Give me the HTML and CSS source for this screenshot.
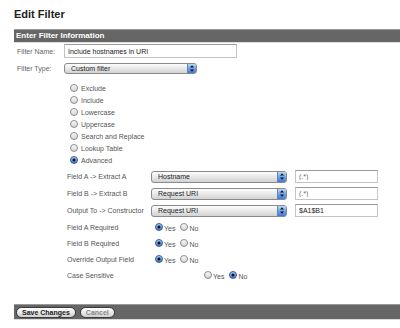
FILE: index.html
```html
<!DOCTYPE html>
<html lang="en">
<head>
    <meta charset="UTF-8">
    <title>Edit Filter</title>
    <link rel="stylesheet" href="styles.css">
</head>
<body>
    <div class="page">
        <h1>Edit Filter</h1>
        <div class="bar">Enter Filter Information</div>

        <div class="row row-name">
            <label class="label" for="filterName">Filter Name:</label>
            <input type="text" id="filterName" class="text name" value="Include hostnames in URI">
        </div>
        <div class="row row-type">
            <span class="label">Filter Type:</span>
            <div class="select type">
                <span class="value">Custom filter</span>
                <span class="arrow"><svg width="6" height="9" viewBox="0 0 6 9"><path d="M1 3.5L3 1.2L5 3.5Z M1 5.5L3 7.8L5 5.5Z" fill="#111"/></svg></span>
            </div>
        </div>

        <ul class="types">
            <li><input type="radio" name="ftype" id="t1"><label for="t1">Exclude</label></li>
            <li><input type="radio" name="ftype" id="t2"><label for="t2">Include</label></li>
            <li><input type="radio" name="ftype" id="t3"><label for="t3">Lowercase</label></li>
            <li><input type="radio" name="ftype" id="t4"><label for="t4">Uppercase</label></li>
            <li><input type="radio" name="ftype" id="t5"><label for="t5">Search and Replace</label></li>
            <li><input type="radio" name="ftype" id="t6"><label for="t6">Lookup Table</label></li>
            <li><input type="radio" name="ftype" id="t7" checked><label for="t7">Advanced</label></li>
        </ul>

        <div class="fields">
            <div class="field-row">
                <span class="field-label">Field A -&gt; Extract A</span>
                <div class="select wide">
                    <span class="value">Hostname</span>
                    <span class="arrow"><svg width="6" height="9" viewBox="0 0 6 9"><path d="M1 3.5L3 1.2L5 3.5Z M1 5.5L3 7.8L5 5.5Z" fill="#111"/></svg></span>
                </div>
                <input type="text" class="text short muted" value="(.*)">
            </div>
            <div class="field-row">
                <span class="field-label">Field B -&gt; Extract B</span>
                <div class="select wide">
                    <span class="value">Request URI</span>
                    <span class="arrow"><svg width="6" height="9" viewBox="0 0 6 9"><path d="M1 3.5L3 1.2L5 3.5Z M1 5.5L3 7.8L5 5.5Z" fill="#111"/></svg></span>
                </div>
                <input type="text" class="text short muted" value="(.*)">
            </div>
            <div class="field-row">
                <span class="field-label">Output To -&gt; Constructor</span>
                <div class="select wide">
                    <span class="value">Request URI</span>
                    <span class="arrow"><svg width="6" height="9" viewBox="0 0 6 9"><path d="M1 3.5L3 1.2L5 3.5Z M1 5.5L3 7.8L5 5.5Z" fill="#111"/></svg></span>
                </div>
                <input type="text" class="text short" value="$A1$B1">
            </div>
        </div>

        <div class="opts">
            <div class="opt-row">
                <span class="opt-label">Field A Required</span>
                <span class="choice"><input type="radio" name="reqA" id="ra1" checked><label for="ra1">Yes</label></span>
                <span class="choice"><input type="radio" name="reqA" id="ra2"><label for="ra2">No</label></span>
            </div>
            <div class="opt-row">
                <span class="opt-label">Field B Required</span>
                <span class="choice"><input type="radio" name="reqB" id="rb1" checked><label for="rb1">Yes</label></span>
                <span class="choice"><input type="radio" name="reqB" id="rb2"><label for="rb2">No</label></span>
            </div>
            <div class="opt-row">
                <span class="opt-label">Override Output Field</span>
                <span class="choice"><input type="radio" name="over" id="ro1" checked><label for="ro1">Yes</label></span>
                <span class="choice"><input type="radio" name="over" id="ro2"><label for="ro2">No</label></span>
            </div>
            <div class="opt-row case">
                <span class="opt-label">Case Sensitive</span>
                <span class="choice"><input type="radio" name="case" id="rc1"><label for="rc1">Yes</label></span>
                <span class="choice"><input type="radio" name="case" id="rc2" checked><label for="rc2">No</label></span>
            </div>
        </div>

        <div class="bar actions">
            <button type="button" class="btn primary">Save Changes</button>
            <button type="button" class="btn">Cancel</button>
        </div>
    </div>
</body>
</html>
```

FILE: styles.css
```css
body {
    margin: 0;
    background: #fff;
    font-family: "Liberation Sans", Arial, sans-serif;
    font-size: 7px;
    color: #555;
}

.page {
    padding-left: 14px;
}

h1 {
    margin: 0 0 8px;
    padding-top: 7px;
    font-size: 11px;
    line-height: 14px;
    color: #222;
}

/* dark header / footer strips */
.bar {
    height: 12px;
    line-height: 12px;
    padding-left: 2px;
    background: #666;
    border-top: 1px solid #999;
    border-bottom: 1px solid #ddd;
    color: #fff;
    font-size: 8px;
    font-weight: bold;
}

.row {
    display: flex;
    align-items: center;
    padding-left: 3px;
}
.row .label {
    width: 47px;
    color: #666;
}
.row-name {
    margin-top: 1px;
    height: 14px;
}
.row-type {
    margin-top: 5px;
    height: 11px;
}

.text {
    box-sizing: border-box;
    margin: 0;
    padding: 0 3px;
    border: 1px solid #c4c4c4;
    border-top-color: #999;
    font-family: inherit;
    font-size: 7px;
    color: #222;
    background: #fff;
}
.text.name {
    width: 173px;
    height: 14px;
}
.text.short {
    width: 83px;
    height: 13px;
}
.text.muted {
    color: #666;
}

/* aqua style select */
.select {
    box-sizing: border-box;
    display: flex;
    align-items: stretch;
    border: 1px solid #8a8a8a;
    border-radius: 3px;
    background: linear-gradient(#fdfdfd, #e6e6e6 55%, #d2d2d2);
    color: #222;
    overflow: hidden;
}
.select .value {
    flex: 1;
    padding-left: 6px;
    display: flex;
    align-items: center;
}
.select .arrow {
    width: 8px;
    display: flex;
    align-items: center;
    justify-content: center;
    border-left: 1px solid #5d86be;
    background: linear-gradient(#bcd8f8, #6ea3e6 50%, #3f7bd3);
}
.select.type {
    width: 133px;
    height: 11px;
}
.select.wide {
    width: 136px;
    height: 12px;
    margin-right: 8px;
}

input[type="radio"] {
    appearance: none;
    -webkit-appearance: none;
    box-sizing: border-box;
    width: 8px;
    height: 8px;
    margin: 0;
    border: 1px solid #8c8c8c;
    border-radius: 50%;
    background: linear-gradient(#fafafa, #d4d4d4);
    flex: none;
}
input[type="radio"]:checked {
    border-color: #34598f;
    background: radial-gradient(circle, #111 0 1.2px, transparent 1.8px),
        linear-gradient(#a9cdf6, #3a7bd8);
}

.types {
    list-style: none;
    margin: 8px 0 0;
    padding-left: 56px;
}
.types li {
    height: 12px;
    display: flex;
    align-items: center;
    gap: 3px;
}

.fields {
    margin-top: 2px;
    padding-left: 53px;
}
.field-row {
    height: 17px;
    display: flex;
    align-items: center;
}
.field-label {
    width: 84px;
}

.opts {
    padding-left: 53px;
}
.opt-row {
    height: 16px;
    display: flex;
    align-items: center;
    gap: 5px;
}
.opt-label {
    width: 83px;
}
.opt-row.case .opt-label {
    width: 132px;
}
.choice {
    display: flex;
    align-items: center;
}
.choice label {
    margin-left: 1px;
    padding-top: 3px;
}

.bar.actions {
    margin-top: 21px;
    height: 14px;
    display: flex;
    align-items: center;
    gap: 4px;
}
.btn {
    height: 11px;
    padding: 0 5px;
    border: 1px solid #3c3c3c;
    border-radius: 6px;
    background: linear-gradient(#fff, #e4e4e4 60%, #d0d0d0);
    font-family: inherit;
    font-size: 7px;
    font-weight: bold;
    line-height: 9px;
    color: #888;
}
.btn.primary {
    color: #222;
}
```
